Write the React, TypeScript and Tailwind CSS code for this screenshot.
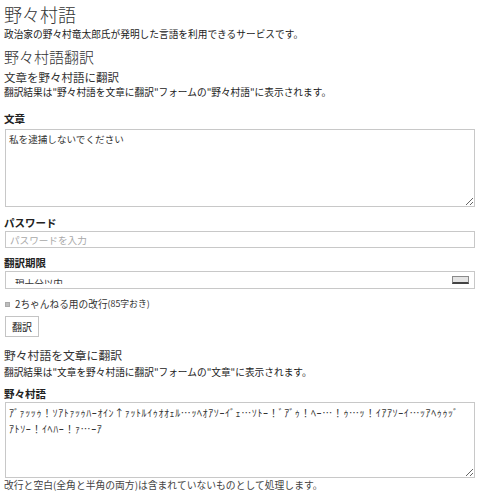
import { useState } from 'react'

const nonomura =
  'ｱﾞｧｯｯｩ！ｿｱﾄｧｯｩﾊｰｵｲﾝ↑ｧｯﾄﾙｲｩｵｵｪﾙ…ｯﾍｵｱｿｰｲﾞｪ…ｿﾄｰ！ﾞｱﾞｩ！ﾍｰ…！ｩ…ｯ！ｲｱｱｿｰｲ…ｯｱﾍｩｩｯﾞ\nｱﾄｿｰ！ｲﾍﾊｰ！ｧ…ｰｱ'

const label = 'text-[10.5px] leading-[14px] font-bold text-[#222]'
const note = 'text-[9.7px] leading-[14px] text-[#222]'
const field = 'block w-[470px] border border-[#c8c8c8] bg-white text-[#333] outline-none'

export default function App() {
  const [text, setText] = useState('私を逮捕しないでください')
  const [password, setPassword] = useState('')
  const [wrap2ch, setWrap2ch] = useState(true)

  return (
    <div className="h-[493px] w-[483px] overflow-hidden bg-white pl-[4px] font-['Noto_Sans_CJK_JP',sans-serif] text-[#333]">
      <h1 className="mt-[2px] text-[18px] leading-[24px] font-light">野々村語</h1>
      <p className={`mt-[1px] ${note}`}>政治家の野々村竜太郎氏が発明した言語を利用できるサービスです。</p>

      <h2 className="mt-[6px] text-[15px] leading-[20px] font-light">野々村語翻訳</h2>

      <section>
        <h3 className="mt-[2px] text-[11.5px] leading-[16px] font-normal">文章を野々村語に翻訳</h3>
        <p className={note}>翻訳結果は"野々村語を文章に翻訳"フォームの"野々村語"に表示されます。</p>

        <p className={`mt-[13px] ${label}`}>文章</p>
        <textarea
          value={text}
          onChange={(e) => setText(e.target.value)}
          className={`${field} mt-[3px] ml-[1px] h-[78px] pt-[2px] pl-[3px] text-[9.6px] leading-[15px]`}
        />

        <p className={`mt-[9px] ${label}`}>パスワード</p>
        <input
          type="password"
          value={password}
          onChange={(e) => setPassword(e.target.value)}
          placeholder="パスワードを入力"
          className={`${field} mt-[1px] ml-[1px] h-[17px] pl-[4px] text-[9.6px] placeholder:text-[#a8a8a8]`}
        />

        <p className={`mt-[8px] ${label}`}>翻訳期限</p>
        <div className={`${field} mt-[1px] ml-[1px] flex h-[18px] items-start justify-between`}>
          <span className="block h-[12px] overflow-hidden pt-[6px] pl-[9px] text-[9.6px] leading-[10px] text-[#333]">
            現十分以内
          </span>
          <span className="mt-[4px] mr-[5px] h-[8px] w-[17px] border border-[#8a8a8a] border-b-2 border-b-[#444] bg-[#e4e4e4]" />
        </div>

        <label className="mt-[8px] flex h-[14px] cursor-pointer items-center">
          <span
            onClick={() => setWrap2ch(!wrap2ch)}
            className={`ml-[1px] h-[5px] w-[5px] border border-[#aaa] ${wrap2ch ? 'bg-[#bdbdbd]' : 'bg-white'}`}
          />
          <span className="ml-[5px] text-[9.7px] leading-[14px]">2ちゃんねる用の改行</span>
          <span className="text-[8.8px] leading-[14px]">(85字おき)</span>
        </label>

        <button
          type="button"
          className="mt-[5px] ml-[1px] block h-[21px] w-[34px] border border-[#c4c4c4] bg-white text-[10px] text-[#222]"
        >
          翻訳
        </button>
      </section>

      <section>
        <h3 className="mt-[10px] text-[11.8px] leading-[16px] font-normal">野々村語を文章に翻訳</h3>
        <p className={`mt-[2px] ${note}`}>翻訳結果は"文章を野々村語に翻訳"フォームの"文章"に表示されます。</p>

        <p className={`mt-[8px] ${label}`}>野々村語</p>
        <textarea
          defaultValue={nonomura}
          className={`${field} mt-[1px] ml-[1px] h-[76px] pt-[2px] pl-[3px] text-[10px] leading-[15.5px] tracking-[0.6px] whitespace-pre`}
        />
        <p className="text-[9.8px] leading-[14px] text-[#444]">改行と空白(全角と半角の両方)は含まれていないものとして処理します。</p>
      </section>
    </div>
  )
}
